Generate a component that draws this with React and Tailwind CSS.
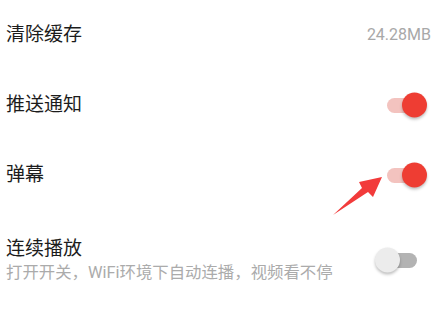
import { useState } from "react";

const font = { fontFamily: 'Roboto, "Noto Sans CJK SC", sans-serif' };

function Toggle({ on }) {
  return (
    <div className={"relative w-[30px] h-[15px] rounded-full " + (on ? "bg-[#f3c3bf]" : "bg-[#b3b3b3]")}>
      <div
        className={
          "absolute top-1/2 -translate-y-1/2 w-[25px] h-[25px] rounded-full shadow-[0_2px_3px_rgba(0,0,0,0.25)] " +
          (on ? "left-[15px] bg-[#ee3d33]" : "left-[-12px] bg-[#ececec]")
        }
      />
    </div>
  );
}

export default function App() {
  const [push] = useState(true);
  const [danmaku] = useState(true);
  const [autoplay] = useState(false);

  return (
    <div className="relative w-[436px] h-[314px] bg-white overflow-hidden" style={font}>
      <div className="flex flex-col">
        <div className="h-[70px] flex items-center justify-between pl-[6px] pr-[5px]">
          <span className="text-[19px] leading-[26px] text-[#1c1c1c]">清除缓存</span>
          <span className="text-[16px] text-[#a8a8a8]">24.28MB</span>
        </div>
        <div className="h-[70px] flex items-center justify-between pl-[6px] pr-[19px]">
          <span className="text-[19px] leading-[26px] text-[#1c1c1c]">推送通知</span>
          <Toggle on={push} />
        </div>
        <div className="h-[70px] flex items-center justify-between pl-[6px] pr-[19px]">
          <span className="text-[19px] leading-[26px] text-[#1c1c1c]">弹幕</span>
          <Toggle on={danmaku} />
        </div>
        <div className="flex items-center justify-between pl-[6px] pr-[19px] pt-[26px]">
          <div className="flex flex-col">
            <span className="text-[19px] leading-[26px] text-[#1c1c1c]">连续播放</span>
            <span className="text-[16.4px] leading-[22px] text-[#ababab]">打开开关，WiFi环境下自动连播，视频看不停</span>
          </div>
          <Toggle on={autoplay} />
        </div>
      </div>

      {/* annotation arrow */}
      <svg className="absolute left-0 top-0 pointer-events-none" width="436" height="314">
        <polygon points="333,215 362,188 359,182 382,177 373,197 368,192" fill="#f23b3b" />
      </svg>
    </div>
  );
}
